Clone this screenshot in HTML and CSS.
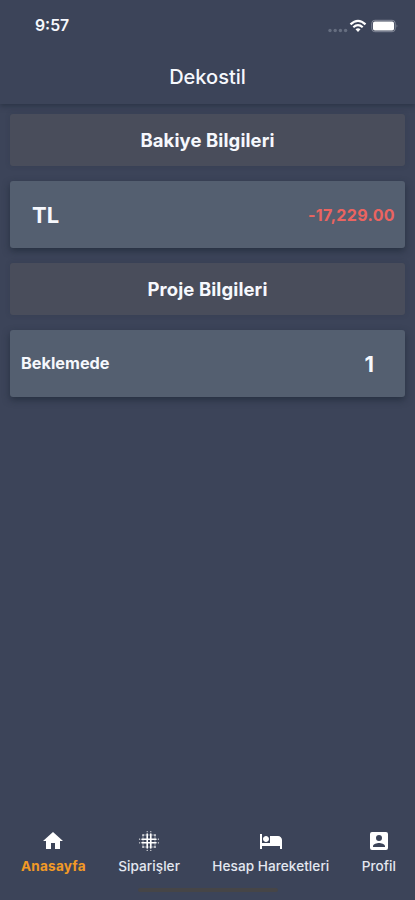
FILE: index.html
```html
<!DOCTYPE html>
<html lang="tr">
<head>
<meta charset="utf-8">
<title>Dekostil</title>
<link rel="stylesheet" href="styles.css">
</head>
<body>
<div class="app">
  <header class="header">
    <div class="status">
      <span class="time">9:57</span>
      <div class="indicators">
        <svg class="dots" width="20" height="14" viewBox="0 0 20 14" fill="#666e80"><circle cx="2" cy="9.500" r="1.700"/><circle cx="7.200" cy="9.500" r="1.700"/><circle cx="12.400" cy="9.500" r="1.700"/><circle cx="17.600" cy="9.500" r="1.700"/></svg>
        <svg class="wifi" width="18" height="14" viewBox="0 0 18 14" fill="none" stroke="#fff" stroke-width="2.200"><path d="M1.500 5.400Q9-1.800 16.500 5.400M4.300 8.200Q9 3.900 13.700 8.200"/><path d="M6.500 10.200Q9 8.300 11.500 10.200L9 12.900Z" fill="#fff" stroke="none"/></svg>
        <svg class="battery" width="28" height="14" viewBox="0 0 28 14"><rect x=".8" y="1.300" width="23.400" height="11.400" rx="3" fill="none" stroke="#858b9a" stroke-width="1"/><rect x="2" y="2.500" width="21" height="9" rx="1.800" fill="#fff"/><path d="M25.600 5.200Q27.300 7 25.600 8.800Z" fill="#858b9a"/></svg>
      </div>
    </div>
    <h1 class="title">Dekostil</h1>
  </header>
  <main class="content">
    <h2 class="section">Bakiye Bilgileri</h2>
    <div class="card"><span class="currency">TL</span><span class="amount">-17,229.00</span></div>
    <h2 class="section project">Proje Bilgileri</h2>
    <div class="card"><span class="state">Beklemede</span><span class="count">1</span></div>
  </main>
  <nav class="nav">
    <a class="tab home active">
      <svg width="24" height="24" viewBox="0 0 24 24" fill="#fff"><path d="M10 20v-6h4v6h5v-8h3L12 3 2 12h3v8z"/></svg>
      <span>Anasayfa</span>
    </a>
    <a class="tab orders">
      <svg width="24" height="24" viewBox="0 0 24 24" fill="none" stroke="#fff" stroke-linecap="round"><path stroke-width="1.600" d="M10.200 5v14M13.800 5v14M5 10.200h14M5 13.800h14"/><path stroke-width="1.200" stroke-opacity=".85" d="M10.200 2.500v.2M13.800 2.500v.2M10.200 21.300v.2M13.800 21.300v.2M2.500 10.200h.2M2.500 13.800h.2M21.300 10.200h.2M21.300 13.800h.2"/><path stroke-width="1.700" stroke-opacity=".85" d="M6 6h.1M18 6h.1M6 18h.1M18 18h.1"/><path stroke-width=".8" stroke-opacity=".6" d="M6 6h12M6 18h12M6 6v12M18 6v12"/></svg>
      <span>Siparişler</span>
    </a>
    <a class="tab account">
      <svg width="24" height="24" viewBox="0 0 24 24" fill="#fff"><path d="M7 13c1.660 0 3-1.340 3-3S8.660 7 7 7s-3 1.340-3 3 1.340 3 3 3zm12-6h-8v7H3V5H1v15h2v-3h18v3h2v-9c0-2.210-1.790-4-4-4z"/></svg>
      <span>Hesap Hareketleri</span>
    </a>
    <a class="tab profile">
      <svg width="24" height="24" viewBox="0 0 24 24" fill="#fff"><path d="M3 5v14a2 2 0 0 0 2 2h14a2 2 0 0 0 2-2V5a2 2 0 0 0-2-2H5a2 2 0 0 0-2 2zm12 4a3 3 0 1 1-6 0 3 3 0 0 1 6 0zm-9 8c0-2 4-3.100 6-3.100s6 1.100 6 3.100v1H6z"/></svg>
      <span>Profil</span>
    </a>
  </nav>
  <div class="home-bar"></div>
</div>
</body>
</html>
```
FILE: styles.css
```css
* { box-sizing: border-box; }
body {
  margin: 0;
  background: #3c4459;
  color: #f6f8fd;
  font-family: Inter, "Liberation Sans", sans-serif;
}
.app {
  height: 900px;
  display: flex;
  flex-direction: column;
  overflow: hidden;
}
.header {
  height: 104px;
  flex: none;
  box-shadow: 0 2px 5px rgba(30, 40, 55, .55);
}
.status {
  height: 50px;
  padding: 1px 16px 0 35px;
  display: flex;
  align-items: center;
  justify-content: space-between;
}
.time { font-size: 15.8px; font-weight: 600; line-height: 21px; }
.indicators { display: flex; align-items: center; }
.dots { margin-top: 4px; }
.wifi { margin-left: 1px; }
.battery { margin-left: 4px; }
.title {
  margin: 0;
  font-size: 20px;
  line-height: 54px;
  font-weight: 550;
  text-align: center;
}
.content {
  flex: 1;
  padding: 10px 10px 0;
}
.section {
  height: 52px;
  margin: 0 0 15px;
  background: #494d5b;
  border-radius: 3px;
  font-size: 18.5px;
  line-height: 53px;
  font-weight: 700;
  letter-spacing: .1px;
  text-align: center;
  box-shadow: 0 0 5px rgba(35, 45, 62, .22);
}
.section.project { margin-top: 15px; }
.card {
  height: 67px;
  padding: 0 10px 0 11px;
  display: flex;
  align-items: center;
  justify-content: space-between;
  background: #545f70;
  border-radius: 3px;
  box-shadow: 0 3px 7px rgba(28, 38, 52, .65);
}
.currency { padding-left: 11px; font-size: 22px; font-weight: 700; }
.amount { color: #eb6460; font-size: 16px; font-weight: 700; letter-spacing: .35px; }
.state { font-size: 16.3px; line-height: 20px; padding-bottom: 1px; font-weight: 700; }
.count { padding-right: 21px; font-size: 22px; font-weight: 700; }
.nav {
  height: 54px;
  flex: none;
  padding: 0 19px 0 21px;
  display: flex;
  justify-content: space-between;
}
.tab {
  display: flex;
  flex-direction: column;
  align-items: center;
  font-size: 13.6px;
  line-height: 21px;
  font-weight: 550;
  letter-spacing: .05px;
  white-space: nowrap;
  color: #e4e8f1;
}
.tab svg { flex: none; margin-bottom: 3px; }
.active { color: #f29a26; font-weight: 700; letter-spacing: .2px; }
.home-bar {
  flex: none;
  width: 140px;
  height: 4px;
  margin: 5px auto 8px;
  border-radius: 2px;
  background: #464547;
}
```
